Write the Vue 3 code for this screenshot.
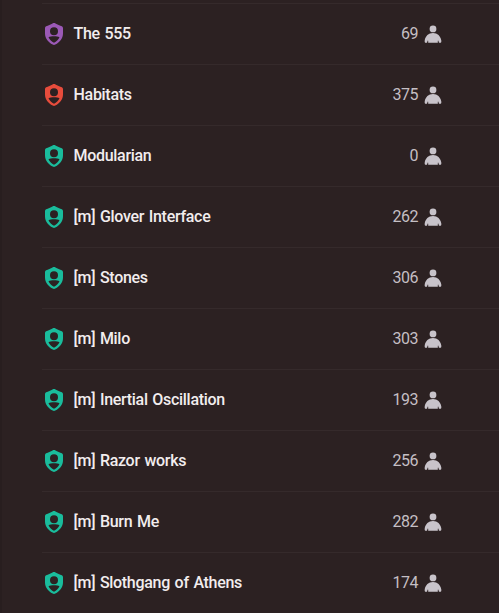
<script setup>
const roles = [
  { name: 'The 555', members: 69, color: '#9b59b6' },
  { name: 'Habitats', members: 375, color: '#e74c3c' },
  { name: 'Modularian', members: 0, color: '#1abc9c' },
  { name: '[m] Glover Interface', members: 262, color: '#1abc9c' },
  { name: '[m] Stones', members: 306, color: '#1abc9c' },
  { name: '[m] Milo', members: 303, color: '#1abc9c' },
  { name: '[m] Inertial Oscillation', members: 193, color: '#1abc9c' },
  { name: '[m] Razor works', members: 256, color: '#1abc9c' },
  { name: '[m] Burn Me', members: 282, color: '#1abc9c' },
  { name: '[m] Slothgang of Athens', members: 174, color: '#1abc9c' },
];
</script>

<template>
  <main class="roles">
    <ul class="role-list">
      <li v-for="role in roles" :key="role.name" class="role">
        <svg class="shield" viewBox="0 0 18 22" :style="{ color: role.color }">
          <path
            fill="currentColor"
            fill-rule="evenodd"
            d="M9 0C10 0 10.5 .5 11.5 1.1C12.8 1.9 14.3 2.5 16 2.9C17.3 3.2 18 4 18 5.2V10.5C18 15.5 14.8 19.2 10.3 21.6Q9 22.3 7.7 21.6C3.2 19.2 0 15.5 0 10.5V5.2C0 4 .7 3.2 2 2.9C3.7 2.5 5.2 1.9 6.5 1.1C7.5 .5 8 0 9 0ZM9 4.2A4 4 0 1 0 9 12.2A4 4 0 1 0 9 4.2ZM3.5 14.3C4.7 16.8 6.6 18.5 9 19.8C11.4 18.5 13.3 16.8 14.5 14.3C13.2 13.5 11.4 13.2 9 13.2C6.6 13.2 4.8 13.5 3.5 14.3Z"
          />
        </svg>
        <span class="name">{{ role.name }}</span>
        <span class="count">{{ role.members }}</span>
        <svg class="person" viewBox="0 0 18 18">
          <circle cx="9" cy="3.9" r="3.4" />
          <path d="M9 8.1C4.5 8.1 1.4 11.1 .7 15.5C.5 17 .9 17.8 1.7 17.8H3L3.6 15.7Q4.2 15 4.2 16V17.8H13.8V16Q13.8 15 14.4 15.7L15 17.8H16.3C17.1 17.8 17.5 17 17.3 15.5C16.6 11.1 13.5 8.1 9 8.1Z" />
        </svg>
      </li>
    </ul>
  </main>
</template>

<style>
body {
  margin: 0;
  overflow: hidden;
  background: #2c2122;
}
</style>

<style scoped>
.roles {
  box-sizing: border-box;
  height: 613px;
  overflow: hidden;
  border-left: 2px solid #281e1f;
  padding: 3px 0 0 40px;
}

.role-list {
  list-style: none;
  margin: 0;
  padding: 0;
}

.role {
  display: flex;
  align-items: center;
  box-sizing: border-box;
  height: 61px;
  padding: 0 57px 0 3px;
  border-top: 1px solid #352a2b;
  font-family: Roboto, sans-serif;
  font-size: 16px;
  line-height: 20px;
}

.shield {
  width: 18px;
  height: 22px;
  margin-right: 10.5px;
}

.name {
  flex: 1;
  color: #f2edee;
  font-weight: 500;
  letter-spacing: -0.3px;
  word-spacing: 1px;
  white-space: nowrap;
}

.count {
  color: #c5bfc4;
  letter-spacing: -0.5px;
}

.person {
  width: 18px;
  height: 18px;
  margin-left: 6px;
  fill: #c8c3ca;
}
</style>
